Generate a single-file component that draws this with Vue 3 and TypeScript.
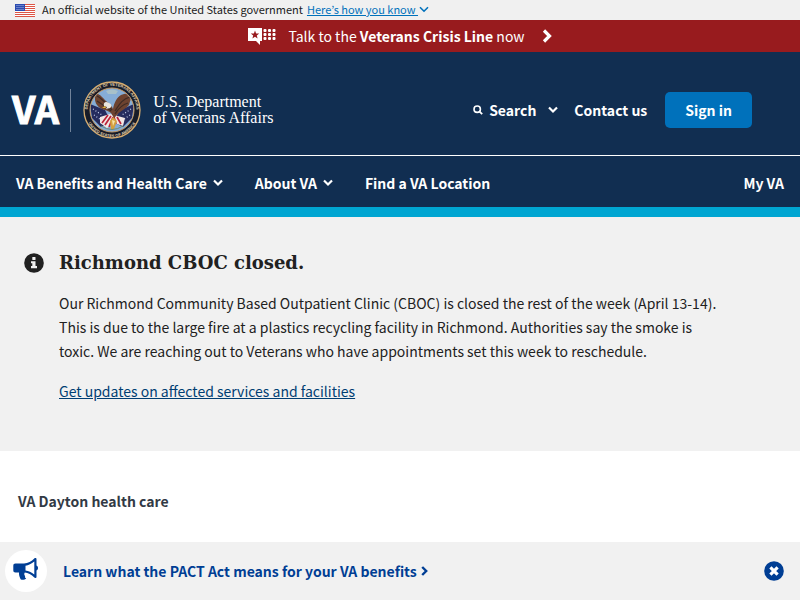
<script setup lang="ts">
interface NavItem {
  label: string
  menu: boolean
}

const navItems: NavItem[] = [
  { label: 'VA Benefits and Health Care', menu: true },
  { label: 'About VA', menu: true },
  { label: 'Find a VA Location', menu: false },
]

const stripes = [0, 2, 4, 6, 8, 10, 12]
const starRows = [1, 3, 5]
const starCols = [1, 3, 5, 7]
const dotCols = [17, 21.5, 26]
const dotRows = [3, 7, 11]
</script>

<template>
  <div class="page">
    <div class="gov-banner">
      <svg class="flag" viewBox="0 0 20 13" aria-hidden="true">
        <rect width="20" height="13" fill="#fff" />
        <rect v-for="y in stripes" :key="y" :y="y" width="20" height="1" fill="#dd5546" />
        <rect width="10" height="7" fill="#2b4bb0" />
        <template v-for="y in starRows" :key="y">
          <circle v-for="x in starCols" :key="x" :cx="x + 1" :cy="y + 0.5" r="0.5" fill="#d3dcf5" />
        </template>
      </svg>
      <span>An official website of the United States government</span>
      <button class="gov-toggle" type="button">
        <span>Here’s how you know </span>
        <svg width="10" height="7" viewBox="0 0 10 7" aria-hidden="true">
          <path d="M1 1.2 5 5.2 9 1.2" fill="none" stroke="currentColor" stroke-width="1.6" />
        </svg>
      </button>
    </div>

    <button class="crisis" type="button">
      <svg width="28" height="17" viewBox="0 0 28 17" aria-hidden="true">
        <path d="M0 0H14V13H12V17L8 13H0Z" fill="#fff" />
        <path d="M7 2.5 8.1 5.4 11.2 5.5 8.8 7.4 9.6 10.4 7 8.7 4.4 10.4 5.2 7.4 2.8 5.5 5.9 5.4Z" fill="#981b1e" />
        <template v-for="y in dotRows" :key="y">
          <rect v-for="x in dotCols" :key="x" :x="x - 1.5" :y="y - 2" width="3" height="3" rx="1" fill="#fff" />
        </template>
      </svg>
      <span>Talk to the <strong>Veterans Crisis Line</strong> now</span>
      <svg class="crisis-arrow" width="10" height="14" viewBox="0 0 10 14" aria-hidden="true">
        <path d="M2 1.5 7.5 7 2 12.5" fill="none" stroke="#fff" stroke-width="3.2" />
      </svg>
    </button>

    <header>
      <div class="masthead">
        <a class="logo" href="#" aria-label="VA, U.S. Department of Veterans Affairs">
          <span class="logo-va">VA</span>
          <span class="logo-rule"></span>
          <svg class="seal" viewBox="0 0 58 58" aria-hidden="true">
            <defs>
              <path id="seal-top" d="M6.1 38 A24.5 24.5 0 1 1 51.9 38" />
              <path id="seal-bottom" d="M4.2 40 A27.1 27.1 0 0 0 53.8 40" />
              <clipPath id="seal-clip"><circle cx="29" cy="29" r="21.5" /></clipPath>
            </defs>
            <circle cx="29" cy="29" r="28" fill="#171c29" stroke="#d7ad70" stroke-width="1.3" />
            <text class="seal-text"><textPath href="#seal-top" startOffset="50%">DEPARTMENT OF VETERANS AFFAIRS</textPath></text>
            <text class="seal-text"><textPath href="#seal-bottom" startOffset="50%">UNITED STATES OF AMERICA</textPath></text>
            <circle cx="29" cy="29" r="22" fill="#86add6" stroke="#c99d68" stroke-width="1" />
            <g clip-path="url(#seal-clip)">
              <path d="M23 10Q29 7 35 10L33 13H25Z" fill="#a8c1c9" />
              <path d="M7 23 22 29 28 41 18 46 9 37Z" fill="#252c5e" />
              <path d="M51 23 37 29 30 41 40 46 49 37Z" fill="#252c5e" />
              <path d="M10 28 19 34M11 34 18 39M48 28 39 34M47 34 40 39" stroke="#c7d2ed" stroke-width="1.2" stroke-dasharray="1 2" />
              <path d="M17 36 27 33 31 34 42 37 40 45 31 42 24 47 17 42Z" fill="#f1e7e5" />
              <path d="M19 42 25 34M22 44 28 35M26 46 30 36M33 43 31 36M38 43 34 36" stroke="#b92339" stroke-width="1.7" />
              <path d="M28 32C23 28 17 29 14 24C11 20 12 15 13 12C18 14 20 17 23 20C26 22 29 25 30 28C31 22 34 16 38 14C42 12 46 13 49 13C48 18 47 20 46 24C43 28 38 29 34 34L31 37Z" fill="#6d4330" />
              <path d="M14 15C20 18 23 23 29 29M14 20C19 23 23 26 28 30M47 16C39 18 36 24 32 30M45 22C38 24 35 28 32 33" fill="none" stroke="#3d2b25" stroke-width="1.2" />
              <path d="M21 25C20 21 23 20 26 22C29 23 29 26 27 27L23 28 24 26Z" fill="#e9e5dd" />
              <path d="M22 25 19 27 23 27Z" fill="#e2b83b" />
              <path d="M27 40 30 36 34 40 31 48H28Z" fill="#d3a13e" />
              <path d="M29 39 32 40 30 45Z" fill="#f6e0a6" />
              <path d="M18 45Q29 52 40 45" fill="none" stroke="#6f8a72" stroke-width="1" />
            </g>
          </svg>
          <span class="logo-name">U.S. Department<br />of Veterans Affairs</span>
        </a>
        <div class="tools">
          <button class="tool search" type="button">
            <svg width="10" height="10" viewBox="0 0 10 10" aria-hidden="true">
              <circle cx="4.2" cy="4.2" r="3.2" fill="none" stroke="#fff" stroke-width="1.6" />
              <path d="M6.6 6.6 9.2 9.2" stroke="#fff" stroke-width="1.8" />
            </svg>
            <span>Search</span>
            <svg class="search-caret" width="10" height="8" viewBox="0 0 10 8" aria-hidden="true">
              <path d="M1 1.5 5 5.5 9 1.5" fill="none" stroke="#fff" stroke-width="2.2" />
            </svg>
          </button>
          <a class="tool" href="#">Contact us</a>
          <button class="sign-in" type="button">Sign in</button>
        </div>
      </div>
      <nav>
        <template v-for="item in navItems" :key="item.label">
          <button v-if="item.menu" class="nav-item" type="button">
            <span>{{ item.label }}</span>
            <svg width="10" height="8" viewBox="0 0 10 8" aria-hidden="true">
              <path d="M1 1.5 5 5.5 9 1.5" fill="none" stroke="#fff" stroke-width="2.2" />
            </svg>
          </button>
          <a v-else class="nav-item" href="#">{{ item.label }}</a>
        </template>
        <a class="nav-item my-va" href="#">My VA</a>
      </nav>
    </header>

    <main>
      <section class="alert">
        <svg class="info" width="20" height="20" viewBox="0 0 20 20" aria-hidden="true">
          <circle cx="10" cy="10" r="9.8" fill="#212121" />
          <rect x="8.3" y="4" width="3.2" height="3" rx="0.6" fill="#f1f1f1" />
          <path d="M7 8.2H11.5V13H13V15.2H7V13H8.3V10.3H7Z" fill="#f1f1f1" />
        </svg>
        <div class="alert-body">
          <h2>Richmond CBOC closed.</h2>
          <p>Our Richmond Community Based Outpatient Clinic (CBOC) is closed the rest of the week (April 13-14). This is due to the large fire at a plastics recycling facility in Richmond. Authorities say the smoke is toxic. We are reaching out to Veterans who have appointments set this week to reschedule.</p>
          <p><a href="#">Get updates on affected services and facilities</a></p>
        </div>
      </section>
      <p class="system-name">VA Dayton health care</p>
    </main>

    <aside class="promo">
      <span class="promo-icon">
        <svg width="26" height="24" viewBox="0 0 26 24" aria-hidden="true">
          <path d="M2.5 6.5H11C15 6.5 18.5 4.5 21.3 1.6C22 .8 23.5 1 23.5 2.2V8.5C25.5 9.2 25.5 12.8 23.5 13.5V20C23.5 21.2 22 21.4 21.3 20.6C18.5 17.7 15 15.7 11.8 15.6C10.9 17 11.2 18 12.2 19.2C11.4 20 12.4 20.8 13.2 21.5C12 23 8.6 23.2 7.6 22.2C6.6 20 5.8 18 6 15.5H2.5C1 15.5 .3 14.7 .3 13.3V8.7C.3 7.3 1 6.5 2.5 6.5Z" fill="#003e94" />
          <path d="M12.5 8.7C15.5 8.4 18.5 7 21.3 4.6V17.6C18.5 15.2 15.5 13.7 12.5 13.4Z" fill="#fff" />
        </svg>
      </span>
      <a class="promo-link" href="#">
        <span>Learn what the PACT Act means for your VA benefits</span>
        <svg width="7" height="10" viewBox="0 0 7 10" aria-hidden="true">
          <path d="M1.2 1 5.2 5 1.2 9" fill="none" stroke="currentColor" stroke-width="2.4" />
        </svg>
      </a>
      <button class="dismiss" type="button" aria-label="Close">
        <svg width="20" height="20" viewBox="0 0 20 20" aria-hidden="true">
          <circle cx="10" cy="10" r="9.8" fill="#003e94" />
          <path d="M6.4 6.4 13.6 13.6M13.6 6.4 6.4 13.6" stroke="#fff" stroke-width="3.2" />
        </svg>
      </button>
    </aside>
  </div>
</template>

<style>
body {
  margin: 0;
}
</style>

<style scoped>
.page {
  display: flex;
  flex-direction: column;
  min-height: 100vh;
  background: #fff;
  color: #212121;
  font-family: "Noto Sans CJK KR", "Noto Sans", sans-serif;
  font-size: 14px;
  line-height: 24px;
}

button {
  margin: 0;
  padding: 0;
  border: 0;
  background: none;
  color: inherit;
  font: inherit;
  cursor: pointer;
}

svg {
  flex: none;
}

.gov-banner {
  display: flex;
  align-items: center;
  height: 20px;
  padding: 0 15px;
  background: #f0f0f0;
  font-size: 11px;
  line-height: 18px;
}

.gov-banner > span,
.gov-toggle {
  padding-bottom: 2px;
}

.flag {
  width: 20px;
  height: 13px;
  margin-right: 7px;
}

.gov-toggle {
  display: flex;
  align-items: center;
  gap: 1px;
  margin-left: 4px;
  color: #0071bb;
}

.gov-toggle span {
  text-decoration: underline;
  white-space: pre;
}

.crisis {
  display: flex;
  align-items: center;
  justify-content: center;
  gap: 12px;
  height: 32px;
  background: #981b1e;
  color: #fff;
}

.crisis-arrow {
  margin-left: 5px;
}

header {
  background: #112e51;
  color: #fff;
  font-weight: 700;
  border-bottom: 10px solid #00a6d2;
}

.masthead {
  display: flex;
  align-items: center;
  justify-content: space-between;
  padding: 29px 48px 16px 12px;
  border-bottom: 1px solid #fff;
}

.logo {
  display: flex;
  align-items: center;
  color: #fff;
  text-decoration: none;
}

.logo-va {
  padding-bottom: 4px;
  font-size: 38px;
  line-height: 54px;
  -webkit-text-stroke: 1px #fff;
}

.logo-rule {
  width: 1px;
  height: 43px;
  margin: 0 12px 0 11px;
  background: #71839a;
}

.seal {
  width: 58px;
  height: 58px;
}

.seal-text {
  fill: #e0d2b2;
  font-family: "Liberation Sans", sans-serif;
  font-size: 4px;
  font-weight: 700;
  text-anchor: middle;
}

.logo-name {
  margin-left: 12px;
  font-family: "Liberation Serif", serif;
  font-size: 16px;
  font-weight: 400;
  line-height: 16px;
}

.tools {
  display: flex;
  align-items: center;
}

.tool {
  margin-right: 18px;
  color: #fff;
  text-decoration: none;
}

.search {
  display: flex;
  align-items: center;
  gap: 6px;
  margin-right: 16px;
}

.search-caret {
  margin-left: 6px;
}

.sign-in {
  height: 36px;
  padding: 0 20px;
  border-radius: 5px;
  background: #0071bb;
}

nav {
  display: flex;
  align-items: center;
  gap: 32px;
  height: 51px;
  padding: 2px 16px 0;
  box-sizing: border-box;
}

.nav-item {
  display: flex;
  align-items: center;
  gap: 6px;
  color: #fff;
  text-decoration: none;
}

.my-va {
  margin-left: auto;
}

.alert {
  display: flex;
  gap: 15px;
  padding: 32px 80px 32px 24px;
  background: #f1f1f1;
}

.info {
  margin-top: 4px;
}

.alert-body {
  flex: 1;
}

h2 {
  margin: 0 0 14px;
  font-family: "DejaVu Serif", serif;
  font-size: 18px;
  font-weight: 700;
  line-height: 28px;
}

.alert-body p {
  margin: 0 0 16px;
}

.alert-body a {
  color: #003e73;
  text-decoration: underline;
}

.system-name {
  margin: 0;
  padding: 38px 18px 29px;
  color: #323a45;
  font-weight: 700;
}

.promo {
  position: sticky;
  bottom: 0;
  display: flex;
  align-items: center;
  height: 58px;
  margin-top: auto;
  padding: 0 16px 0 5px;
  background: #f1f1f1;
  color: #003e94;
  font-weight: 700;
}

.promo-icon {
  display: flex;
  align-items: center;
  justify-content: center;
  width: 42px;
  height: 42px;
  margin-right: 16px;
  padding-bottom: 4px;
  box-sizing: border-box;
  border-radius: 50%;
  background: #fff;
}

.promo-link {
  display: flex;
  align-items: center;
  gap: 4px;
  color: inherit;
  text-decoration: none;
}

.dismiss {
  display: flex;
  margin-left: auto;
}
</style>
